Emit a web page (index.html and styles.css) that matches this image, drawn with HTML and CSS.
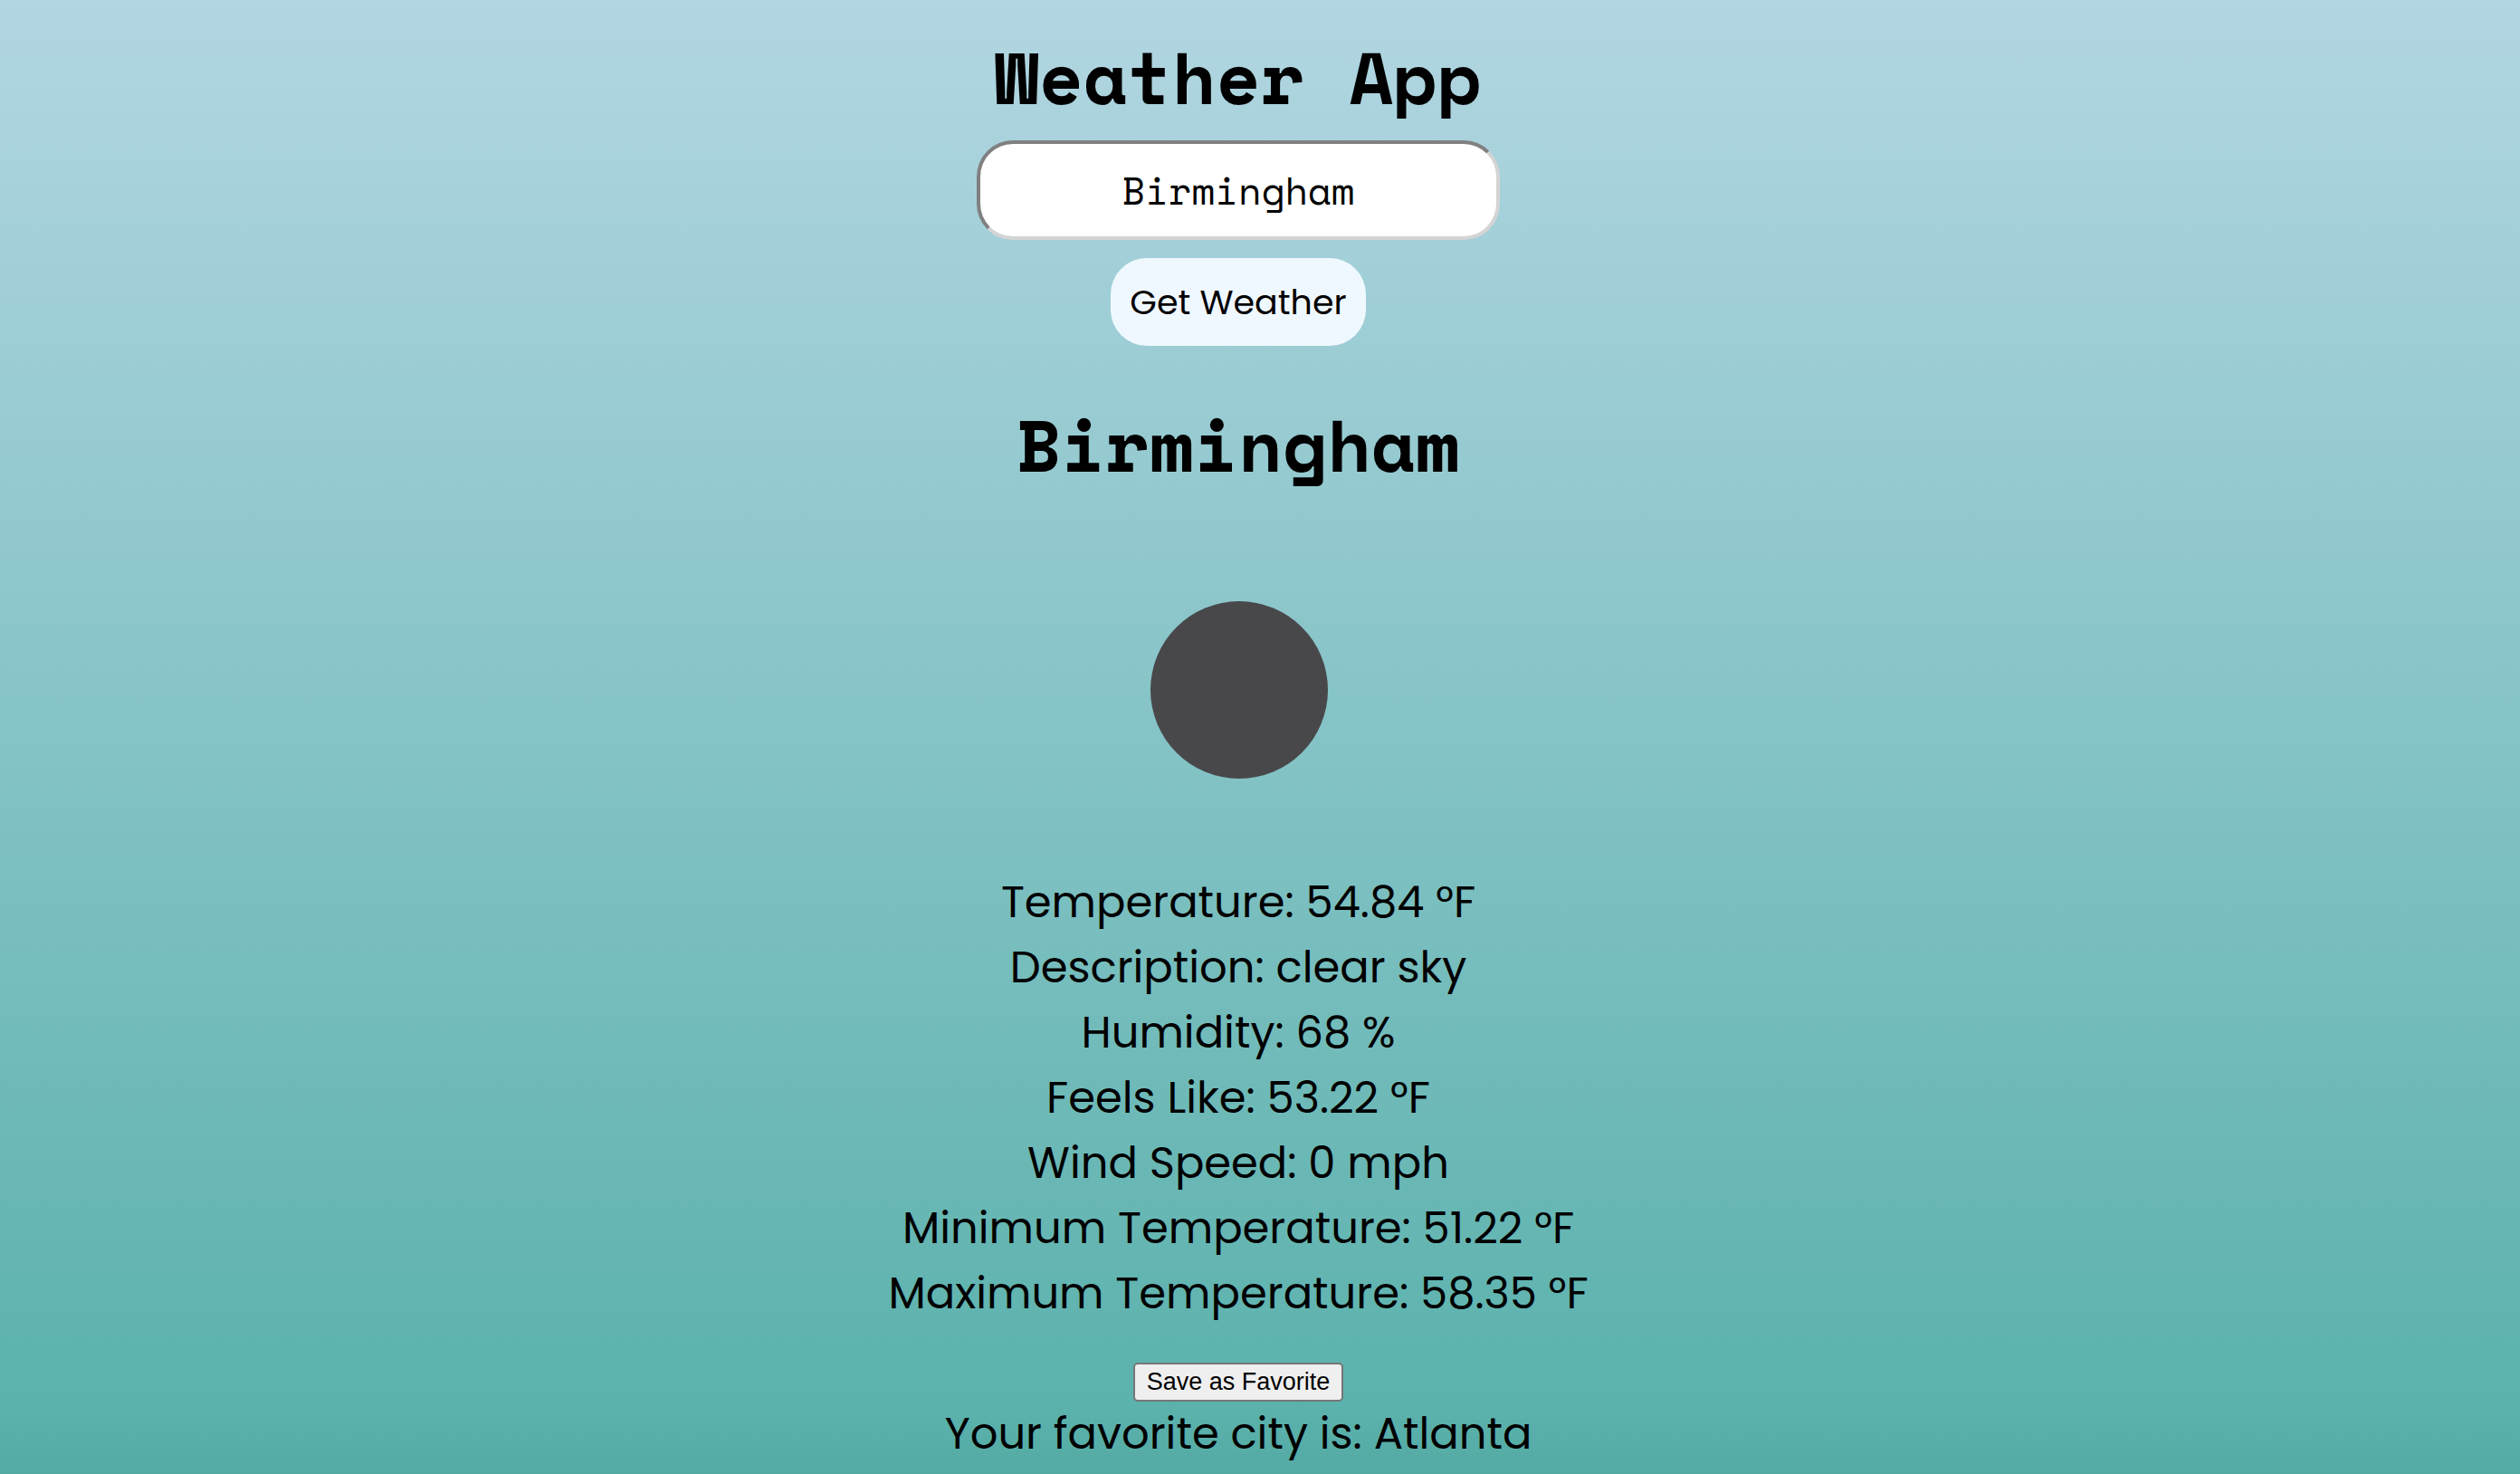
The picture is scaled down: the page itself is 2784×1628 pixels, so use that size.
FILE: index.html
```html
<!DOCTYPE html>
<html lang="en">
<head>
<meta charset="utf-8">
<title>Weather App</title>
<link rel="stylesheet" href="styles.css">
</head>
<body>
<main class="app">
  <h1 class="title">Weather App</h1>
  <form class="search">
    <input class="city-input" type="text" value="Birmingham" aria-label="City">
    <button class="get-weather" type="button">Get Weather</button>
  </form>
  <section class="weather">
    <h2 class="title">Birmingham</h2>
    <svg class="icon" viewBox="0 0 400 400" role="img" aria-label="clear sky"><circle cx="201" cy="201" r="98" fill="#48484a"/></svg>
    <div class="details">
      <p>Temperature: 54.84 °F</p>
      <p>Description: clear sky</p>
      <p>Humidity: 68 %</p>
      <p>Feels Like: 53.22 °F</p>
      <p>Wind Speed: 0 mph</p>
      <p>Minimum Temperature: 51.22 °F</p>
      <p>Maximum Temperature: 58.35 °F</p>
    </div>
  </section>
  <button class="save" type="button">Save as Favorite</button>
  <p class="favorite">Your favorite city is: Atlanta</p>
</main>
</body>
</html>
```
FILE: styles.css
```css
* { box-sizing: border-box; }

html {
  min-height: 100%;
  background:
    linear-gradient(transparent calc(100% - 72px), rgba(0, 0, 0, 0.04)),
    linear-gradient(#b2d6e2, #57b0aa);
}

body {
  margin: 0;
  font-family: Poppins, "Open Sans", sans-serif;
  font-size: 48px;
  line-height: 72px;
  color: #000;
}

p { margin: 0; }

.app {
  display: flex;
  flex-direction: column;
  align-items: center;
  padding: 24px 48px 8px 0;
  text-align: center;
}

.title {
  margin: 0 0 10px;
  font: bold 80px/121px "Space Mono", "Liberation Mono", monospace;
}

.search,
.weather {
  display: flex;
  flex-direction: column;
  align-items: center;
}

.city-input {
  width: 578px;
  height: 110px;
  border: 4px solid;
  border-color: #808080 #d4d4d4 #d4d4d4 #808080;
  border-radius: 40px;
  background: #fff;
  color: #000;
  text-align: center;
  font: 42px "Space Mono", "Liberation Mono", monospace;
}

.get-weather {
  margin-top: 20px;
  width: 282px;
  height: 97px;
  padding: 0;
  border: 0;
  border-radius: 40px;
  background: aliceblue;
  color: #000;
  font: 38px Poppins, "Open Sans", sans-serif;
}

.weather { margin-top: 48px; }

.icon {
  width: 400px;
  height: 400px;
}

.save {
  margin-top: 40px;
  width: 232px;
  height: 43px;
  padding: 0;
  border: 2px solid #767676;
  border-radius: 5px;
  background: #efefef;
  color: #000;
  font: 27px "Liberation Sans", Arial, sans-serif;
}
```
